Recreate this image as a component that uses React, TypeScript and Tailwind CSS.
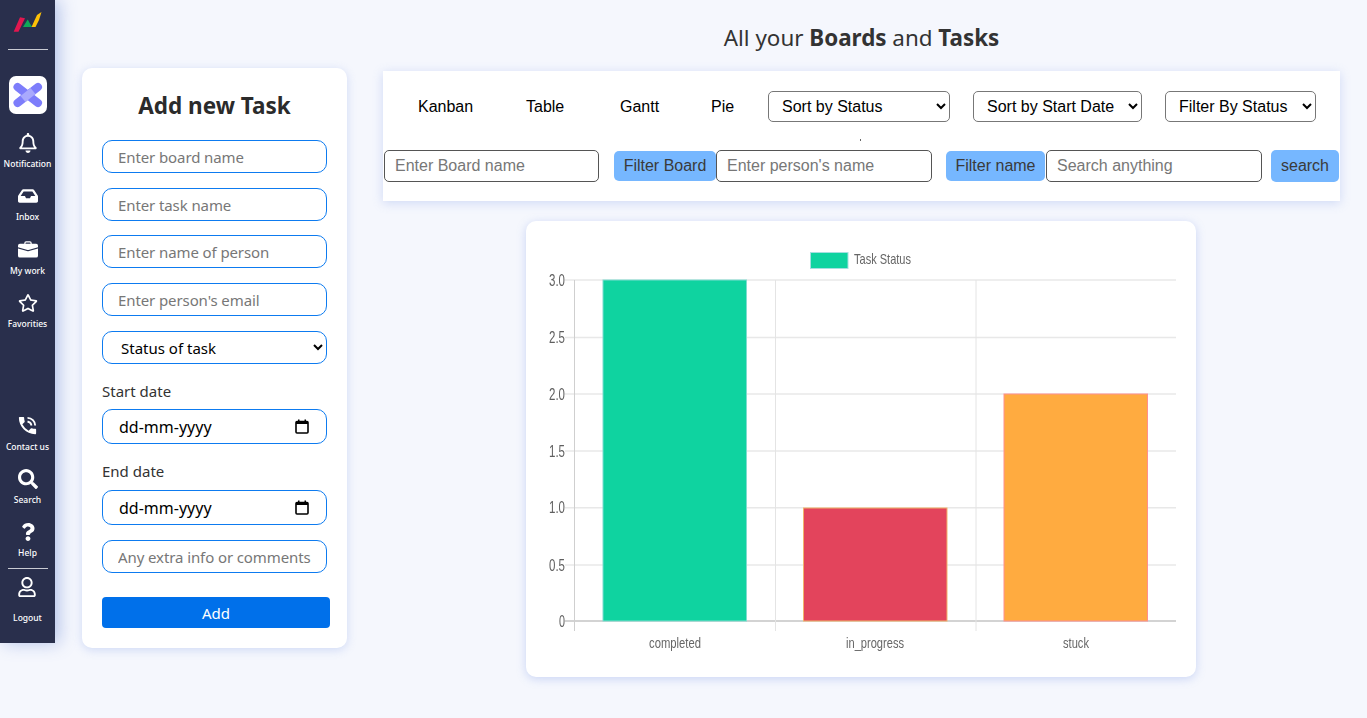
import React from 'react';
import { BsBriefcaseFill } from 'react-icons/bs';
import { FaInbox, FaQuestion, FaRegBell, FaRegStar, FaRegUser, FaSearch } from 'react-icons/fa';
import { MdPhoneInTalk } from 'react-icons/md';

const ui = { fontFamily: '"Noto Sans", sans-serif' };
const arial = { fontFamily: '"Liberation Sans", Arial, sans-serif' };

function NavItem({ icon, label }: { icon: React.ReactNode; label: string }) {
  return (
    <div className="flex h-[53.4px] flex-col items-center text-white">
      <div className="flex h-[22px] items-center text-[20px]">{icon}</div>
      <span className="mt-[4px] text-[8.5px] font-medium leading-[12px]">{label}</span>
    </div>
  );
}

function Sidebar() {
  return (
    <aside className="flex h-[643px] w-[55px] shrink-0 flex-col items-center bg-[#292f4c] shadow-[4px_0_16px_rgba(100,130,210,0.45)]" style={ui}>
      {/* logo strokes, coordinates are page pixels */}
      <svg width="55" height="49" viewBox="0 0 55 49" className="shrink-0">
        <polygon points="13.7,31.7 20,17.3 25,18.3 18.5,31.7" fill="#e2174f" />
        <polygon points="23,27 27.7,19.5 32,27" fill="#0fa958" />
        <polygon points="31.5,27 37,15 41.5,12 39,20 35.5,27" fill="#fdc107" />
      </svg>
      <div className="h-[1px] w-[40px] shrink-0 bg-[#c9cbd2]" />
      <div className="mt-[26px] flex h-[38px] w-[38px] items-center justify-center rounded-[7px] bg-white">
        <svg width="38" height="38" viewBox="0 0 38 38">
          <line x1="8.5" y1="11" x2="29" y2="27" stroke="#7d7dfb" strokeWidth="8" strokeLinecap="round" />
          <line x1="29" y1="11" x2="8.5" y2="27" stroke="#7d7dfb" strokeWidth="8" strokeLinecap="round" />
          <line x1="24" y1="15" x2="14" y2="23" stroke="#a9a9fd" strokeWidth="8" />
        </svg>
      </div>
      <div className="mt-[18px] w-full">
        <NavItem icon={<FaRegBell />} label="Notification" />
        <NavItem icon={<FaInbox />} label="Inbox" />
        <NavItem icon={<BsBriefcaseFill />} label="My work" />
        <NavItem icon={<FaRegStar />} label="Favorities" />
      </div>
      <div className="mt-[69px] w-full">
        <NavItem icon={<MdPhoneInTalk className="text-[23px]" />} label="Contact us" />
        <NavItem icon={<FaSearch />} label="Search" />
        <NavItem icon={<FaQuestion className="text-[18px]" />} label="Help" />
      </div>
      <div className="mt-[-7px] h-[1px] w-[40px] bg-[#c9cbd2]" />
      <div className="mt-[8px] flex flex-col items-center text-white">
        <FaRegUser className="text-[20px]" />
        <span className="mt-[15px] text-[8.5px] font-medium leading-[12px]">Logout</span>
      </div>
    </aside>
  );
}

function Field({ placeholder, className = '' }: { placeholder: string; className?: string }) {
  return (
    <input
      placeholder={placeholder}
      className={`block h-[33px] w-[225px] rounded-[10px] border border-[#0d7bf0] bg-white pl-[15px] text-[15px] tracking-[-0.1px] outline-none placeholder:text-[#777] ${className}`}
    />
  );
}

function DateField() {
  return (
    <div className="relative h-[35px] w-[225px]">
      <input
        readOnly
        value="dd-mm-yyyy"
        className="block h-full w-full rounded-[10px] border border-[#0d7bf0] bg-white pl-[16px] text-[16px] text-black outline-none"
      />
      <svg width="14" height="15" viewBox="0 0 14 15" className="absolute right-[18px] top-[10px]">
        <rect x="1" y="2.5" width="12" height="11.5" rx="1" fill="none" stroke="#000" strokeWidth="1.6" />
        <rect x="1" y="2" width="12" height="3" fill="#000" />
        <rect x="3" y="0.5" width="1.5" height="2" fill="#000" />
        <rect x="9.5" y="0.5" width="1.5" height="2" fill="#000" />
      </svg>
    </div>
  );
}

function TaskForm() {
  return (
    <section className="ml-[27px] mt-[68px] h-[580px] w-[265px] shrink-0 rounded-[10px] bg-white pl-[20px] pt-[22px] shadow-[0_2px_10px_rgba(120,150,230,0.3)]" style={ui}>
      <h2 className="w-[225px] text-center text-[22.5px] font-bold leading-[32px] text-[#2b2b2b]">Add new Task</h2>
      <Field placeholder="Enter board name" className="mt-[18px]" />
      <Field placeholder="Enter task name" className="mt-[15px]" />
      <Field placeholder="Enter name of person" className="mt-[14px]" />
      <Field placeholder="Enter person's email" className="mt-[15px]" />
      <select className="mt-[15px] block h-[33px] w-[225px] rounded-[10px] border border-[#0d7bf0] bg-white pl-[14px] text-[15px] text-black">
        <option>Status of task</option>
      </select>
      <div className="mt-[16px] h-[29px] text-[15px] leading-[22px] text-[#333]">Start date</div>
      <DateField />
      <div className="mt-[16px] h-[30px] text-[15px] leading-[22px] text-[#333]">End date</div>
      <DateField />
      <Field placeholder="Any extra info or comments" className="mt-[15px]" />
      <button className="mt-[24px] block h-[31px] w-[228px] rounded-[4px] bg-[#0070ea] pt-[2px] text-[15px] text-white">Add</button>
    </section>
  );
}

function Toolbar() {
  const selectCls = 'h-[31px] rounded-[5px] border border-[#777] bg-white pl-[9px] text-[16px] text-black';
  const inputCls = 'h-[32px] rounded-[5px] border border-[#555] bg-white pl-[10px] text-[16px] outline-none placeholder:text-[#777]';
  const btnCls = 'h-[30px] rounded-[5px] bg-[#76b7ff] text-[16px] text-[#3a3a3a]';
  return (
    <div className="relative mt-[15px] h-[130px] w-[957px] bg-white pt-[20px] shadow-[0_2px_10px_rgba(120,150,230,0.3)]" style={arial}>
      <div className="flex h-[31px] items-center pl-[35px] text-[16px] text-black">
        <span className="w-[108px]">Kanban</span>
        <span className="w-[94px]">Table</span>
        <span className="w-[91px]">Gantt</span>
        <span className="w-[57px]">Pie</span>
        <select className={`${selectCls} w-[182px]`}><option>Sort by Status</option></select>
        <select className={`${selectCls} ml-[23px] w-[169px]`}><option>Sort by Start Date</option></select>
        <select className={`${selectCls} ml-[23px] w-[151px]`}><option>Filter By Status</option></select>
      </div>
      <span className="absolute left-[477px] top-[68px] h-[2px] w-[1px] bg-[#666]" />
      <div className="mt-[28px] flex items-center pl-[1px]">
        <input placeholder="Enter Board name" className={`${inputCls} w-[215px]`} />
        <button className={`${btnCls} ml-[15px] w-[102px]`}>Filter Board</button>
        <input placeholder="Enter person's name" className={`${inputCls} w-[216px]`} />
        <button className={`${btnCls} ml-[14px] w-[99px]`}>Filter name</button>
        <input placeholder="Search anything" className={`${inputCls} ml-[1px] w-[216px]`} />
        <button className={`${btnCls} ml-[9px] h-[32px] w-[68px]`}>search</button>
      </div>
    </div>
  );
}

const yTicks = [
  { label: '3.0', y: 280 },
  { label: '2.5', y: 337.5 },
  { label: '2.0', y: 394 },
  { label: '1.5', y: 451 },
  { label: '1.0', y: 507.7 },
  { label: '0.5', y: 565 },
  { label: '0', y: 621 },
];

const bars = [
  { label: 'completed', x: 603, top: 280, fill: '#0fd3a0', stroke: '#7fdcd0', tw: 52, cx: 675 },
  { label: 'in_progress', x: 803.5, top: 508, fill: '#e3445c', stroke: '#f2b36b', tw: 58, cx: 875 },
  { label: 'stuck', x: 1004, top: 394, fill: '#ffab40', stroke: '#ff8f8f', tw: 26, cx: 1076 },
];

function ChartCard() {
  return (
    <div className="ml-[143px] mt-[20px] h-[456px] w-[670px] rounded-[10px] bg-white shadow-[0_2px_10px_rgba(120,150,230,0.35)]">
      <svg width="670" height="456" viewBox="526 221 670 456" className="blur-[0.3px]" style={arial}>
        <rect x="810.5" y="252.5" width="37.5" height="16" fill="#0fd3a0" stroke="#a5dfe0" />
        <text x="854" y="264" fontSize="15" fill="#666" textLength="57" lengthAdjust="spacingAndGlyphs">Task Status</text>
        {yTicks.map((t) => (
          <g key={t.label}>
            <line x1="565" x2="1176" y1={t.y} y2={t.y} stroke={t.label === '0' ? '#c4c4c4' : '#e8e8e8'} strokeWidth="1.4" />
            <text x="565" y={t.y + 5.5} fontSize="16" fill="#5f5f5f" textAnchor="end" textLength={t.label === '0' ? 6 : 16} lengthAdjust="spacingAndGlyphs">{t.label}</text>
          </g>
        ))}
        <line x1="574.5" x2="574.5" y1="280" y2="631" stroke="#cfcfcf" />
        <line x1="775.5" x2="775.5" y1="280" y2="631" stroke="#e4e4e4" />
        <line x1="976" x2="976" y1="280" y2="631" stroke="#e4e4e4" />
        {bars.map((b) => (
          <g key={b.label}>
            <rect x={b.x} y={b.top} width="143.5" height={621 - b.top} fill={b.fill} stroke={b.stroke} />
            <text x={b.cx} y="648" fontSize="15" fill="#666" textAnchor="middle" textLength={b.tw} lengthAdjust="spacingAndGlyphs">{b.label}</text>
          </g>
        ))}
      </svg>
    </div>
  );
}

export default function App() {
  return (
    <div className="flex h-[718px] w-[1367px] overflow-hidden bg-[#f5f7fd]">
      <Sidebar />
      <TaskForm />
      <main className="ml-[36px] w-[957px] shrink-0">
        <h1 className="mt-[20px] h-[36px] text-center text-[22.4px] leading-[35px] text-[#333]" style={ui}>
          All your <b>Boards</b> and <b>Tasks</b>
        </h1>
        <Toolbar />
        <ChartCard />
      </main>
    </div>
  );
}
